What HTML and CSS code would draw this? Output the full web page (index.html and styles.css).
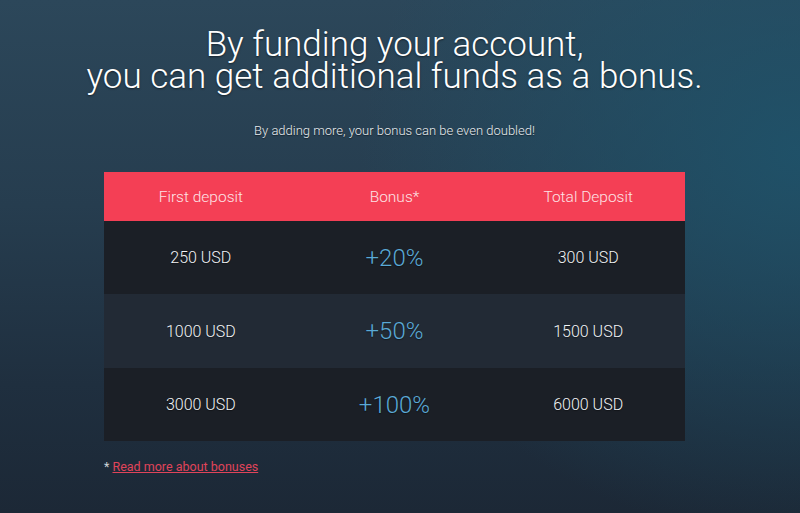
FILE: index.html
```html
<!DOCTYPE html>
<html>
<head>
<meta charset="utf-8">
<link rel="stylesheet" href="styles.css">
</head>
<body>
<main class="page">
  <h1 class="title"><span class="line">By funding your account,</span><span class="line">you can get additional funds as a bonus.</span></h1>
  <p class="subtitle">By adding more, your bonus can be even doubled!</p>
  <div class="table">
    <div class="row head">
      <div class="cell">First deposit</div>
      <div class="cell">Bonus*</div>
      <div class="cell">Total Deposit</div>
    </div>
    <div class="row dark">
      <div class="cell">250 USD</div>
      <div class="cell bonus">+20%</div>
      <div class="cell">300 USD</div>
    </div>
    <div class="row light">
      <div class="cell">1000 USD</div>
      <div class="cell bonus">+50%</div>
      <div class="cell">1500 USD</div>
    </div>
    <div class="row dark">
      <div class="cell">3000 USD</div>
      <div class="cell bonus">+100%</div>
      <div class="cell">6000 USD</div>
    </div>
  </div>
  <p class="note">* <a href="#" class="link">Read more about bonuses</a></p>
</main>
</body>
</html>
```

FILE: styles.css
```css
html, body {
  margin: 0;
  padding: 0;
  height: 100%;
}
body {
  background:
    radial-gradient(ellipse 55% 75% at 100% 30%, rgba(30, 84, 108, 0.85) 0%, rgba(30, 84, 108, 0) 100%),
    linear-gradient(180deg, #2c475a 0%, #263d4f 40%, #1f2f3f 75%, #1c2836 100%);
  background-color: #1c2836;
  font-family: Roboto, "Liberation Sans", sans-serif;
  color: #fff;
  overflow: hidden;
  padding-right: 11px;
  box-sizing: border-box;
}
.page {
  width: 581px;
  margin: 0 auto;
  padding-top: 29px;
  display: flex;
  flex-direction: column;
  align-items: center;
}
.title {
  margin: 0;
  font-weight: 300;
  font-size: 35px;
  text-align: center;
  white-space: nowrap;
  text-shadow: 0 1px 2px rgba(0,0,0,0.5);
  display: flex;
  flex-direction: column;
  align-items: center;
}
.line {
  display: block;
  height: 32px;
  line-height: 32px;
}
.subtitle {
  margin: 30px 0 0;
  font-size: 13px;
  font-weight: 300;
  line-height: 16px;
  color: #e8ecef;
  text-shadow: 0 1px 1px rgba(0,0,0,0.5);
}
.table {
  margin-top: 33px;
  width: 581px;
  display: flex;
  flex-direction: column;
}
.row {
  display: grid;
  grid-template-columns: 1fr 1fr 1fr;
  align-items: center;
  height: 73px;
}
.row.head {
  height: 49px;
  background: #f43f55;
  color: #fde3e6;
}
.row.dark { background: #1b1f26; }
.row.light { background: #222a35; height: 74px; }
.cell {
  text-align: center;
  font-size: 16px;
  font-weight: 300;
  color: #f2f4f6;
  text-shadow: 0 1px 1px rgba(0,0,0,0.4);
}
.row.head .cell {
  font-size: 15.5px;
  color: #fde3e6;
  text-shadow: none;
}
.cell.bonus {
  color: #5aa9d6;
  font-size: 24px;
  font-weight: 300;
}
.note {
  align-self: flex-start;
  margin: 18px 0 0;
  font-size: 12.5px;
  color: #cfd4d8;
}
.link {
  color: #e0445a;
  text-decoration: underline;
}
```
